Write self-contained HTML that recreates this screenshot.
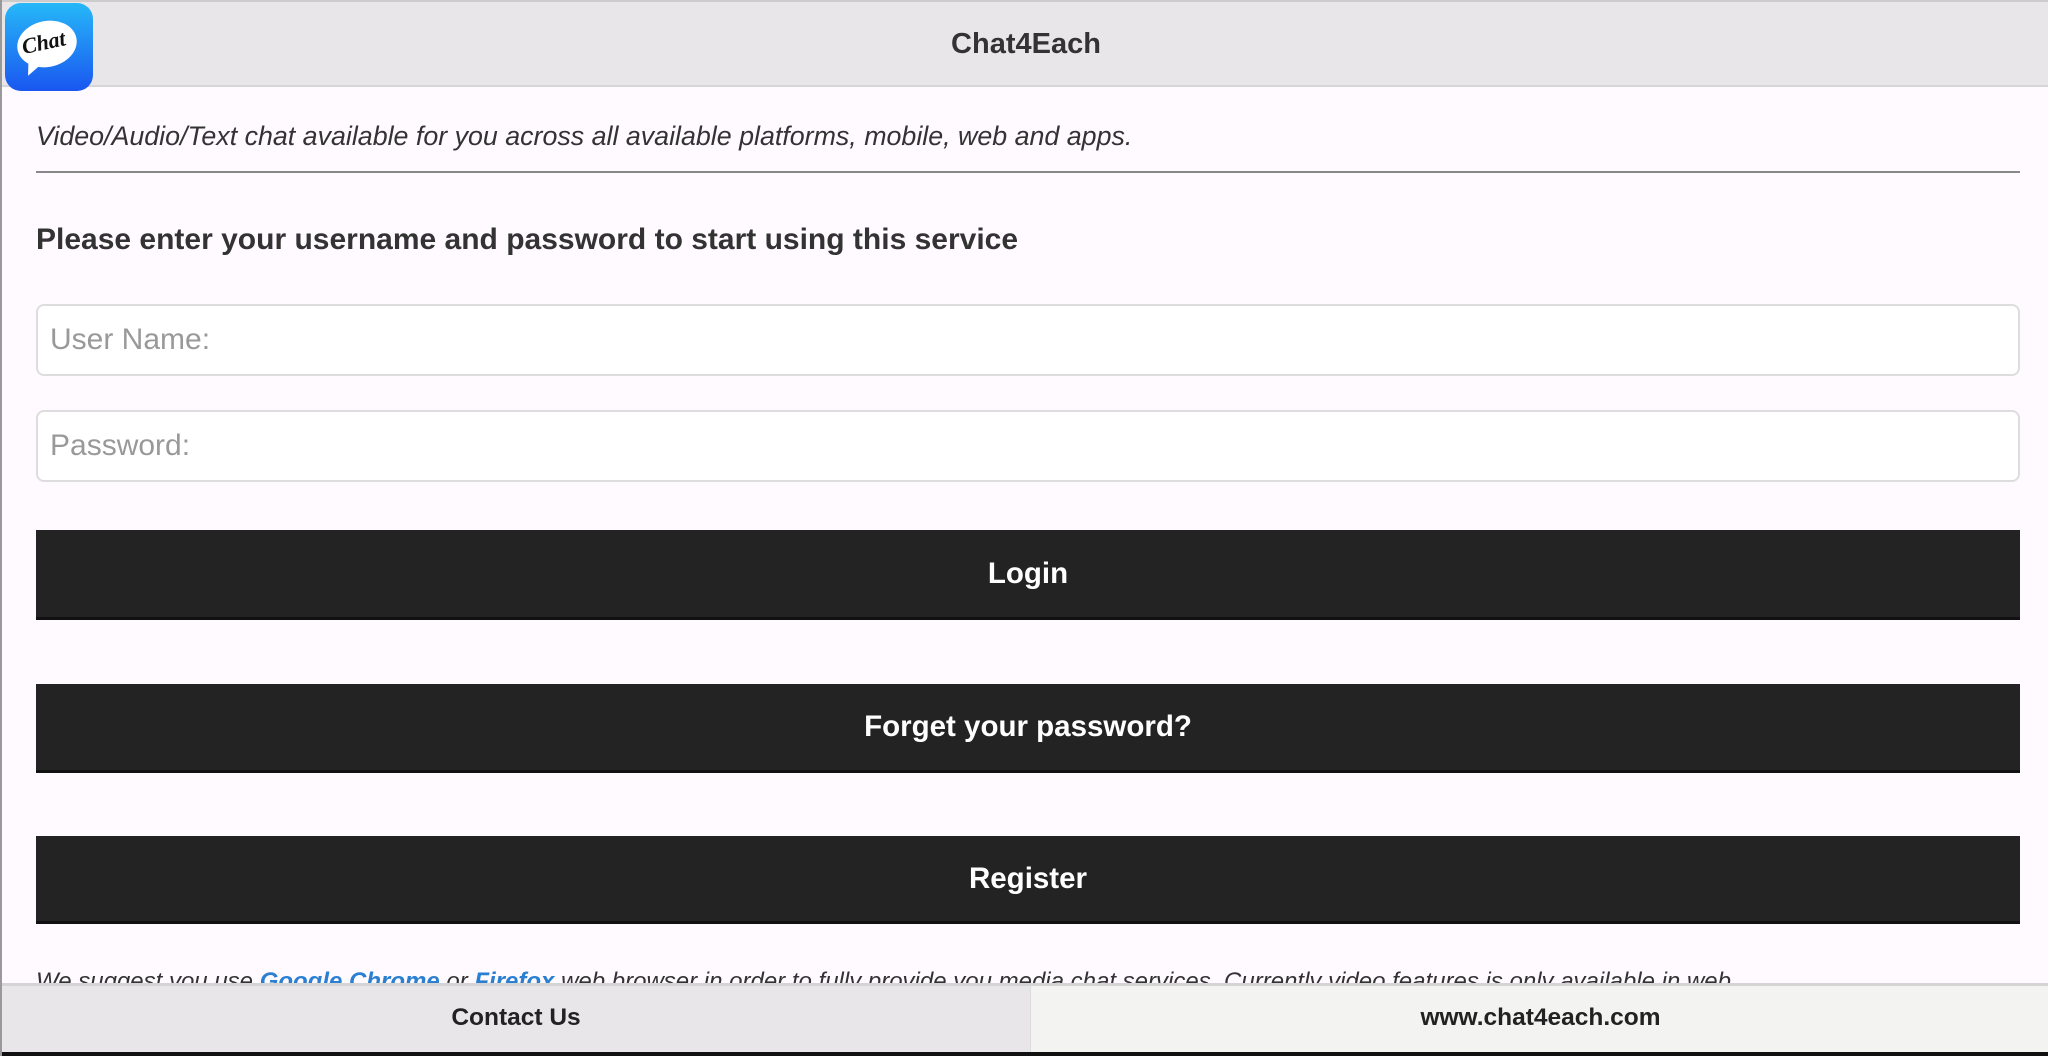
<!DOCTYPE html>
<html><head><style>
*{margin:0;padding:0;box-sizing:border-box}
body{width:2048px;height:1056px;overflow:hidden;background:#fffaff;font-family:"Liberation Sans",sans-serif;position:relative;border-left:2px solid #999}
.hdr{position:absolute;left:0;top:0;width:2048px;height:87px;background:#e9e6ea;border-top:2px solid #ccc;border-bottom:2px solid #d6d6d6;text-align:center;font-weight:bold;font-size:29px;line-height:84px;color:#333}
.logo{position:absolute;left:3px;top:3px;width:88px;height:88px;border-radius:16px;background:linear-gradient(#26b8f8,#1a56f0);}
.bub{position:absolute;left:12px;top:18px;width:60px;height:46px;border-radius:50%;background:#fff;transform:rotate(-12deg)}
.bub span{position:absolute;left:5px;top:8px;font-family:"Liberation Serif",serif;font-style:italic;font-weight:bold;font-size:22px;color:#111}
.tail{position:absolute;left:20px;top:56px;width:0;height:0;border-left:6px solid transparent;border-right:10px solid transparent;border-top:18px solid #fff;transform:rotate(20deg)}
.tag{position:absolute;left:34px;top:121px;font-style:italic;font-size:26.8px;color:#333}
.hr{position:absolute;left:34px;top:171px;width:1984px;height:2px;background:#888}
.h{position:absolute;left:34px;top:223px;font-weight:bold;font-size:30px;color:#333}
.in{position:absolute;left:34px;width:1984px;height:72px;border:2px solid #ddd;border-radius:8px;background:#fff;font-size:30px;color:#999;padding-left:12px;line-height:68px}
.btn{position:absolute;left:34px;width:1984px;background:#232323;color:#fff;font-weight:bold;font-size:29.5px;text-align:center;border-bottom:3px solid #111}
.cut{position:absolute;left:34px;top:968px;font-style:italic;font-size:24px;color:#333;white-space:nowrap}
.cut b{color:#2a7fd0}
.ft{position:absolute;left:0;top:983px;width:2048px;height:73px;border-top:3px solid #d4d4d4;border-bottom:4px solid #111;display:flex;font-weight:bold;font-size:24.5px;color:#222}
.ft div{flex:0 0 1028px;text-align:center;line-height:64px;background:#e9e6ea}
.ft div+div{flex:1;background:#f3f3f2;border-left:1px solid #ddd}
</style></head><body>
<div class="hdr">Chat4Each</div>
<div class="logo"><div class="tail"></div><div class="bub"><span>Chat</span></div></div>
<div class="tag">Video/Audio/Text chat available for you across all available platforms, mobile, web and apps.</div>
<div class="hr"></div>
<div class="h">Please enter your username and password to start using this service</div>
<div class="in" style="top:304px">User Name:</div>
<div class="in" style="top:410px">Password:</div>
<div class="btn" style="top:530px;height:90px;line-height:88px">Login</div>
<div class="btn" style="top:684px;height:89px;line-height:86px">Forget your password?</div>
<div class="btn" style="top:836px;height:88px;line-height:86px">Register</div>
<div class="cut">We suggest you use <b>Google Chrome</b> or <b>Firefox</b> web browser in order to fully provide you media chat services. Currently video features is only available in web.</div>
<div class="ft"><div>Contact Us</div><div>www.chat4each.com</div></div>
</body></html>
